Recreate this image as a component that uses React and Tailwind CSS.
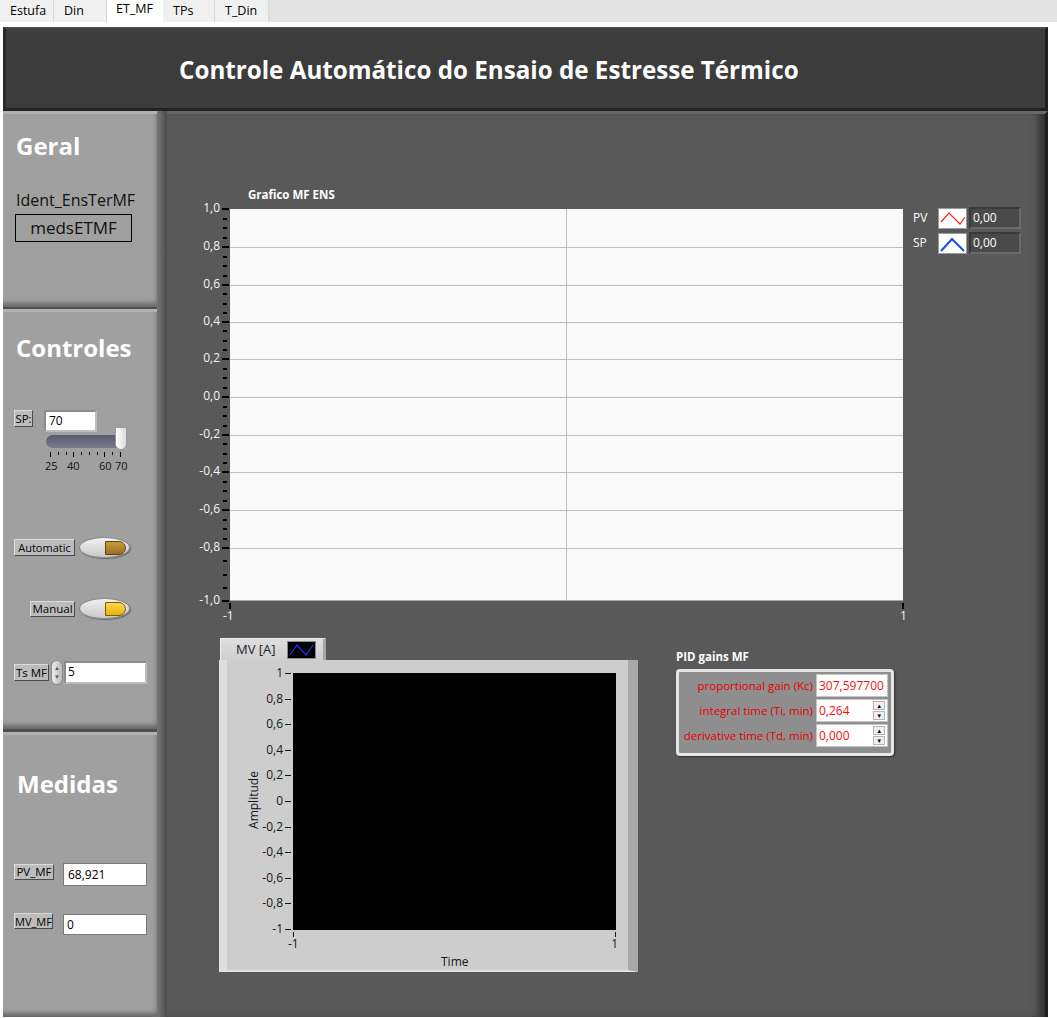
import React from "react";

const tabs = [
  { label: "Estufa", cls: "w-[54px]" },
  { label: "Din", cls: "w-[53px]" },
  { label: "ET_MF", cls: "w-[56px]", active: true },
  { label: "TPs", cls: "w-[52px]" },
  { label: "T_Din", cls: "w-[54px]" },
];

// y offsets (px from plot top) of the big chart's scale marks
const yMarks = [
  ["1,0", 0],
  ["0,8", 38],
  ["0,6", 76],
  ["0,4", 113],
  ["0,2", 150],
  ["0,0", 188],
  ["-0,2", 226],
  ["-0,4", 263],
  ["-0,6", 301],
  ["-0,8", 339],
  ["-1,0", 392],
];

const mvMarks = ["1", "0,8", "0,6", "0,4", "0,2", "0", "-0,2", "-0,4", "-0,6", "-0,8", "-1"];

function TabBar() {
  return (
    <div className="flex h-[22px] bg-[#e3e3e3]">
      {tabs.map((tab) =>
        tab.active ? (
          <div key={tab.label} className={`${tab.cls} h-[23px] bg-white pl-[9px] pt-[1px] text-[12.5px] leading-[16px] text-black`}>
            {tab.label}
          </div>
        ) : (
          <div key={tab.label} className={`${tab.cls} h-[22px] border-r border-[#d9d9d9] bg-[#f0f0f0] pl-[10px] pt-[3px] text-[12.5px] leading-[16px] text-black`}>
            {tab.label}
          </div>
        )
      )}
    </div>
  );
}

function LabelBox({ children, className = "" }) {
  return (
    <div
      className={`flex items-center justify-center border border-t-[#dcdcdc] border-l-[#dcdcdc] border-b-[#4a4a4a] border-r-[#4a4a4a] bg-[#bcbcbc] leading-none text-black ${className}`}
    >
      {children}
    </div>
  );
}

function Toggle({ bright }) {
  return (
    <div className="flex h-[21px] w-[51px] items-center justify-end rounded-[50%] border border-[#8a8a8a] bg-gradient-to-b from-[#f2f2f2] to-[#c8c8c8] pr-[3px] shadow-[1px_1px_1px_rgba(0,0,0,0.35)]">
      <div
        className={
          bright
            ? "h-[14px] w-[21px] rounded-l-[2px] rounded-r-full border border-[#7a5a00] bg-gradient-to-b from-[#ffd84a] to-[#e8b010]"
            : "h-[14px] w-[21px] rounded-l-[2px] rounded-r-full border border-[#5e4510] bg-gradient-to-b from-[#c99a3a] to-[#9c7020]"
        }
      />
    </div>
  );
}

function Section({ className = "", children }) {
  return (
    <div
      className={`bg-[#a0a0a0] border-t-[3px] border-t-[#b2b2b2] shadow-[inset_-3px_-7px_5px_-3px_rgba(0,0,0,0.35)] ${className}`}
    >
      {children}
    </div>
  );
}

function Sidebar() {
  return (
    <div className="flex w-[154px] flex-col bg-[#4e4e4e]">
      <Section className="h-[196px] pl-[13px] pt-[17px]">
        <div className="text-[24px] font-bold leading-[30px] text-white">Geral</div>
        <div className="mt-[29px] text-[16px] leading-[20px] text-[#111]">Ident_EnsTerMF</div>
        <div className="mt-[4px] ml-[-1px] flex h-[28px] w-[117px] items-center justify-center border border-black text-[17px] text-[#111]">
          medsETMF
        </div>
      </Section>
      <Section className="mt-[2px] h-[420px] pl-[13px] pt-[21px]">
        <div className="text-[24px] font-bold leading-[30px] text-white">Controles</div>
        <div className="mt-[47px] ml-[-2px] flex items-start">
          <LabelBox className="h-[17px] w-[19px] text-[11.5px]">SP:</LabelBox>
          <div className="ml-[11px] flex flex-col">
            <div className="h-[22px] w-[53px] border-2 border-[#8c8c8c] border-b-[#bdbdbd] border-r-[#bdbdbd] bg-white pl-[3px] text-[12px] leading-[18px] text-black">
              70
            </div>
            <div className="relative mt-[-5px] h-[25px] w-[84px]">
              <div className="absolute left-[2px] top-[8px] h-[13px] w-[81px] rounded-full bg-gradient-to-b from-[#5b5b70] to-[#7a7a8c]" />
              <div className="absolute left-[71px] top-0 h-[23px] w-[12px] rounded-b-full rounded-t-[3px] border border-[#9a9a9a] bg-gradient-to-r from-white to-[#dcdcdc]" />
            </div>
            <div className="relative h-[20px] w-[90px] text-[11px] leading-[12px] text-[#111]">
              {[25, 30, 35, 40, 45, 50, 55, 60, 65, 70].map((v) => (
                <div
                  key={v}
                  className="absolute top-0 w-px bg-black"
                  style={{ left: 6 + (v - 25) * 1.556, height: v === 25 || v === 40 || v === 60 || v === 70 ? 5 : 3 }}
                />
              ))}
              <span className="absolute left-[1px] top-[8px]">25</span>
              <span className="absolute left-[23px] top-[8px]">40</span>
              <span className="absolute left-[55px] top-[8px]">60</span>
              <span className="absolute left-[71px] top-[8px]">70</span>
            </div>
          </div>
        </div>
        <div className="mt-[65px] ml-[-2px] flex items-center gap-[4px]">
          <LabelBox className="h-[17px] w-[61px] text-[11px]">Automatic</LabelBox>
          <Toggle />
        </div>
        <div className="mt-[40px] ml-[14px] flex items-center gap-[4px]">
          <LabelBox className="h-[16px] w-[45px] text-[11.5px]">Manual</LabelBox>
          <Toggle bright />
        </div>
        <div className="mt-[41px] ml-[-2px] flex items-center">
          <LabelBox className="h-[17px] w-[35px] text-[11.5px]">Ts MF</LabelBox>
          <div className="ml-[2px] flex h-[25px] w-[12px] flex-col items-center justify-center rounded-full border border-[#8a8a8a] bg-gradient-to-r from-[#eeeeee] to-[#b8b8b8] text-[6px] leading-[9px] text-[#555]">
            <span>▲</span>
            <span>▼</span>
          </div>
          <div className="ml-[1px] h-[23px] w-[83px] border-2 border-[#8c8c8c] border-b-[#bdbdbd] border-r-[#bdbdbd] bg-white pl-[2px] text-[12px] leading-[18px] text-black">
            5
          </div>
        </div>
      </Section>
      <Section className="mt-[3px] flex-1 pl-[14px] pt-[34px]">
        <div className="text-[24px] font-bold leading-[30px] text-white">Medidas</div>
        <div className="mt-[64px] ml-[-3px] flex items-start gap-[9px]">
          <LabelBox className="mt-px h-[16px] w-[40px] text-[11.5px]">PV_MF</LabelBox>
          <div className="h-[23px] w-[84px] border border-[#7a7a7a] bg-white pl-[4px] text-[12px] leading-[21px] text-black">68,921</div>
        </div>
        <div className="mt-[27px] ml-[-3px] flex items-start gap-[10px]">
          <LabelBox className="h-[16px] w-[39px] text-[11px]">MV_MF</LabelBox>
          <div className="mt-px h-[21px] w-[84px] border border-[#7a7a7a] bg-white pl-[3px] text-[12px] leading-[19px] text-black">0</div>
        </div>
      </Section>
    </div>
  );
}

function Swatch({ children }) {
  return (
    <div className="h-[21px] w-[29px] border border-[#9a9a9a] bg-white">
      <svg width="27" height="19" viewBox="0 0 27 19">
        {children}
      </svg>
    </div>
  );
}

function Legend() {
  return (
    <div className="ml-[10px] mt-[-2px] flex flex-col gap-[3px]">
      {[
        ["PV", <polyline key="p" points="2,13 10,4 21,15 26,8" fill="none" stroke="#ff1a1a" strokeWidth="1.2" />],
        ["SP", <polyline key="s" points="2,17 13,5 25,17" fill="none" stroke="#1a4fd8" strokeWidth="2" />],
      ].map(([name, line]) => (
        <div key={name} className="flex items-center">
          <span className="w-[25px] text-[12px] text-white">{name}</span>
          <Swatch>{line}</Swatch>
          <div className="ml-[2px] h-[22px] w-[52px] border-2 border-[#3a3a3a] border-b-[#6a6a6a] border-r-[#6a6a6a] bg-[#4a4a4a] pl-[2px] text-[12px] leading-[18px] text-white">
            0,00
          </div>
        </div>
      ))}
    </div>
  );
}

function MainChart() {
  return (
    <div className="ml-[29px] mt-[72px]">
      <div className="h-[23px] pl-[52px] text-[11.5px] font-bold leading-[18px] text-white">Grafico MF ENS</div>
      <div className="flex items-start">
        <div className="relative h-[392px] w-[34px]">
          {yMarks.map(([label, y], i) => (
            <React.Fragment key={label}>
              <span className="absolute right-[10px] text-[12px] leading-[14px] text-[#f4f4f4]" style={{ top: y - 8 }}>
                {label}
              </span>
              <div className="absolute left-[26px] h-[2px] w-[7px] bg-black" style={{ top: y - 1 }} />
              {i < yMarks.length - 1 &&
                [1, 2, 3].map((k) => (
                  <div
                    key={k}
                    className="absolute left-[27px] h-[2px] w-[4px] bg-black"
                    style={{ top: Math.round(y + ((yMarks[i + 1][1] - y) * k) / 4) - 1 }}
                  />
                ))}
            </React.Fragment>
          ))}
        </div>
        <div className="relative h-[392px] w-[673px] border-b border-[#a8a8a8] bg-[#f9f9f9]">
          {yMarks.slice(1, -1).map(([label, y]) => (
            <div key={label} className="absolute left-0 h-px w-full bg-[#bdbdbd]" style={{ top: y }} />
          ))}
          <div className="absolute left-[336px] top-0 h-full w-px bg-[#bdbdbd]" />
        </div>
        <Legend />
      </div>
      <div className="relative h-[24px] w-[720px]">
        <div className="absolute left-[33px] top-[2px] h-[6px] w-[2px] bg-black" />
        <span className="absolute left-[27px] top-[8px] text-[12px] leading-[14px] text-[#f4f4f4]">-1</span>
        <div className="absolute left-[706px] top-[2px] h-[6px] w-[2px] bg-black" />
        <span className="absolute left-[704px] top-[8px] text-[12px] leading-[14px] text-[#f4f4f4]">1</span>
      </div>
    </div>
  );
}

function MvChart() {
  return (
    <div className="w-[419px]">
      <div className="ml-px flex h-[22px] w-[106px] items-center border-l border-t border-[#eeeeee] border-r-[3px] border-r-[#a5a5a5] bg-gradient-to-b from-[#dedede] to-[#cfcfcf]">
        <span className="ml-[15px] text-[13px] leading-none text-[#1c1c2c]">MV [A]</span>
        <div className="ml-[11px] h-[18px] w-[29px] border border-[#8a8a8a] bg-black">
          <svg width="27" height="16" viewBox="0 0 27 16">
            <polyline points="2,13 9,3 18,13 25,3" fill="none" stroke="#2a2aff" strokeWidth="1.2" />
          </svg>
        </div>
      </div>
      <div className="h-[312px] border-l-[8px] border-l-[#dedede] border-r-[10px] border-r-[#a9a9a9] border-b-[2px] border-b-[#e2e2e2] bg-[#cdcdcd] pl-[66px] pt-[13px]">
        <div className="relative h-[257px] w-[323px] bg-black">
          {mvMarks.map((m, i) => (
            <React.Fragment key={m}>
              <span
                className="absolute right-[333px] text-[12px] leading-[14px] text-[#161616]"
                style={{ top: Math.round(i * 25.6) - 7 }}
              >
                {m}
              </span>
              <div className="absolute left-[-8px] h-px w-[6px] bg-[#161616]" style={{ top: Math.round(i * 25.6) }} />
            </React.Fragment>
          ))}
          <span className="absolute left-[-74px] top-[120px] w-[70px] -rotate-90 text-center text-[12px] leading-[14px] text-[#161616]">
            Amplitude
          </span>
          <div className="absolute left-0 top-[259px] h-[5px] w-px bg-[#161616]" />
          <span className="absolute left-[-5px] top-[264px] text-[12px] leading-[14px] text-[#161616]">-1</span>
          <div className="absolute right-0 top-[259px] h-[5px] w-px bg-[#161616]" />
          <span className="absolute right-[-2px] top-[264px] text-[12px] leading-[14px] text-[#161616]">1</span>
          <span className="absolute left-[148px] top-[282px] text-[12px] leading-[14px] text-[#161616]">Time</span>
        </div>
      </div>
    </div>
  );
}

function Spin() {
  return (
    <div className="flex h-[21px] w-[16px] flex-col items-center justify-center gap-px bg-white">
      <div className="flex h-[9px] w-[12px] items-center justify-center border border-[#b5b5b5] bg-[#efefef] text-[6px] leading-none text-black">▲</div>
      <div className="flex h-[9px] w-[12px] items-center justify-center border border-[#b5b5b5] bg-[#efefef] text-[6px] leading-none text-black">▼</div>
    </div>
  );
}

function PidGains() {
  const rows = [
    ["proportional gain (Kc)", "307,597700", false],
    ["integral time (Ti, min)", "0,264", true],
    ["derivative time (Td, min)", "0,000", true],
  ];
  return (
    <div className="ml-[38px] mt-[12px]">
      <div className="text-[11.5px] font-bold leading-[14px] text-white">PID gains MF</div>
      <div className="mt-[5px] h-[87px] w-[218px] rounded-[4px] border-[3px] border-[#e6e6e6] bg-[#8e8e8e] px-[3px] pt-[2px] shadow-[1px_1px_2px_rgba(0,0,0,0.5)]">
        {rows.map(([label, value, spin]) => (
          <div key={label} className="mb-[2px] flex h-[23px] items-center">
            <span className="flex-1 pr-[3px] text-right text-[11.5px] leading-none text-[#e80000]">{label}</span>
            {spin ? (
              <div className="flex w-[72px] border border-[#c4c4c4] bg-white">
                <div className="h-[21px] w-[56px] pl-[2px] text-[12px] leading-[21px] text-[#f01010]">{value}</div>
                <Spin />
              </div>
            ) : (
              <div className="h-[23px] w-[72px] border border-[#c4c4c4] bg-white pl-[2px] text-[12px] leading-[21px] text-[#f01010]">{value}</div>
            )}
          </div>
        ))}
      </div>
    </div>
  );
}

export default function App() {
  return (
    <div className="h-[1018px] w-[1057px] overflow-hidden bg-white font-['Open_Sans',sans-serif]">
      <TabBar />
      <div className="pl-[3px] pr-[9px] pt-[5px]">
        <div className="flex h-[84px] items-center border-b-[3px] border-l-[3px] border-r-[3px] border-t-[2px] border-b-[#222] border-l-[#2a2a2a] border-r-[#1e1e1e] border-t-[#4a4a4a] bg-[#3c3c3c] pl-[173px] pt-[4px]">
          <h1 className="text-[24.2px] font-bold text-white">Controle Automático do Ensaio de Estresse Térmico</h1>
        </div>
        <div className="flex h-[906px]">
          <Sidebar />
          <div className="w-[10px] bg-gradient-to-r from-[#767676] to-[#4c4c4c]" />
          <div className="flex flex-1 flex-col border-r-[3px] border-t-[3px] border-r-[#1e1e1e] border-t-[#666] bg-[#595959] shadow-[inset_-10px_0_8px_-4px_rgba(0,0,0,0.45)]">
            <MainChart />
            <div className="mt-[13px] ml-[52px] flex items-start">
              <MvChart />
              <PidGains />
            </div>
          </div>
        </div>
      </div>
    </div>
  );
}
